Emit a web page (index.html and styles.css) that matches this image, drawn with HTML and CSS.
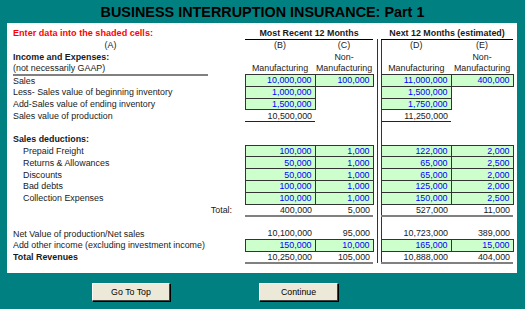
FILE: index.html
```html
<!DOCTYPE html>
<html>
<head>
<meta charset="utf-8">
<title>Business Interruption Insurance: Part 1</title>
<link rel="stylesheet" href="styles.css">
</head>
<body>
<h1 class="title">BUSINESS INTERRUPTION INSURANCE: Part 1</h1>
<div class="panel">
<table class="sheet">
<colgroup><col class="ca1"><col class="ca2"><col class="cb"><col class="cc"><col class="cs1"><col class="cs2"><col class="cd"><col class="ce"></colgroup>
<tr><td colspan="2" class="red b">Enter data into the shaded cells:</td><td colspan="2" class="hd b">Most Recent 12 Months</td><td></td><td></td><td colspan="2" class="hd b">Next 12 Months (estimated)</td></tr>
<tr><td class="ctr">(A)</td><td></td><td class="ctr">(B)</td><td class="ctr">(C)</td><td class="s1"></td><td class="s2"></td><td class="ctr">(D)</td><td class="ctr">(E)</td></tr>
<tr><td colspan="2" class="b">Income and Expenses:</td><td></td><td class="ctr">Non-</td><td class="s1"></td><td class="s2"></td><td></td><td class="ctr">Non-</td></tr>
<tr><td class="ul">(not necessarily GAAP)</td><td></td><td class="ctr">Manufacturing</td><td class="ctr">Manufacturing</td><td class="s1"></td><td class="s2"></td><td class="ctr">Manufacturing</td><td class="ctr">Manufacturing</td></tr>
<tr><td colspan="2">Sales</td><td class="n in">10,000,000</td><td class="n in">100,000</td><td class="s1"></td><td class="s2"></td><td class="n in">11,000,000</td><td class="n in">400,000</td></tr>
<tr><td colspan="2">Less- Sales value of beginning inventory</td><td class="n in">1,000,000</td><td></td><td class="s1"></td><td class="s2"></td><td class="n in">1,500,000</td><td></td></tr>
<tr><td colspan="2">Add-Sales value of ending inventory</td><td class="n in">1,500,000</td><td></td><td class="s1"></td><td class="s2"></td><td class="n in">1,750,000</td><td></td></tr>
<tr><td colspan="2">Sales value of production</td><td class="n sub">10,500,000</td><td></td><td class="s1"></td><td class="s2"></td><td class="n sub">11,250,000</td><td></td></tr>
<tr><td colspan="2"></td><td></td><td></td><td class="s1"></td><td class="s2"></td><td></td><td></td></tr>
<tr><td colspan="2" class="b">Sales deductions:</td><td></td><td></td><td class="s1"></td><td class="s2"></td><td></td><td></td></tr>
<tr><td colspan="2" class="ind">Prepaid Freight</td><td class="n in">100,000</td><td class="n in">1,000</td><td class="s1"></td><td class="s2"></td><td class="n in">122,000</td><td class="n in">2,000</td></tr>
<tr><td colspan="2" class="ind">Returns &amp; Allowances</td><td class="n in">50,000</td><td class="n in">1,000</td><td class="s1"></td><td class="s2"></td><td class="n in">65,000</td><td class="n in">2,500</td></tr>
<tr><td colspan="2" class="ind">Discounts</td><td class="n in">50,000</td><td class="n in">1,000</td><td class="s1"></td><td class="s2"></td><td class="n in">65,000</td><td class="n in">2,000</td></tr>
<tr><td colspan="2" class="ind">Bad debts</td><td class="n in">100,000</td><td class="n in">1,000</td><td class="s1"></td><td class="s2"></td><td class="n in">125,000</td><td class="n in">2,000</td></tr>
<tr><td colspan="2" class="ind">Collection Expenses</td><td class="n in">100,000</td><td class="n in">1,000</td><td class="s1"></td><td class="s2"></td><td class="n in">150,000</td><td class="n in">2,500</td></tr>
<tr><td colspan="2" class="tot">Total:</td><td class="n thick">400,000</td><td class="n thick">5,000</td><td class="s1"></td><td class="s2"></td><td class="n thick">527,000</td><td class="n thick">11,000</td></tr>
<tr><td colspan="2"></td><td></td><td></td><td class="s1"></td><td class="s2"></td><td></td><td></td></tr>
<tr><td colspan="2">Net Value of production/Net sales</td><td class="n">10,100,000</td><td class="n">95,000</td><td class="s1"></td><td class="s2"></td><td class="n">10,723,000</td><td class="n">389,000</td></tr>
<tr><td colspan="2">Add other income (excluding investment income)</td><td class="n in">150,000</td><td class="n in">10,000</td><td class="s1"></td><td class="s2"></td><td class="n in">165,000</td><td class="n in">15,000</td></tr>
<tr><td colspan="2" class="b">Total Revenues</td><td class="n thick">10,250,000</td><td class="n thick">105,000</td><td class="s1"></td><td class="s2"></td><td class="n thick">10,888,000</td><td class="n thick">404,000</td></tr>
</table>
</div>
<div class="actions">
<button class="btn btn-top" type="button">Go To Top</button>
<button class="btn btn-next" type="button">Continue</button>
</div>
</body>
</html>
```
FILE: styles.css
```css
html, body { margin: 0; padding: 0; }
body {
  background: #008080;
  width: 525px;
  height: 309px;
  overflow: hidden;
  font-family: "Liberation Sans", Arial, sans-serif;
}
.title {
  margin: 0;
  height: 23px;
  line-height: 24px;
  text-align: center;
  font-size: 14.4px;
  font-weight: bold;
  color: #000;
}
.panel {
  background: #fff;
  margin-left: 7px;
  width: 510px;
  height: 250px;
  box-sizing: border-box;
  padding: 4.4px 0 0 6px;
}
.sheet {
  border-collapse: collapse;
  table-layout: fixed;
  width: 500px;
  font-size: 8.9px;
  color: #1a1a1a;
}
.ca1 { width: 195px; }
.ca2 { width: 37px; }
.cb { width: 70px; }
.cc { width: 58px; }
.cs1 { width: 4px; }
.cs2 { width: 4px; }
.cd { width: 70px; }
.ce { width: 62px; }
.sheet tr { height: 11.79px; }
.sheet td {
  padding: 0;
  line-height: 10px;
  white-space: nowrap;
  overflow: hidden;
  vertical-align: middle;
}
.b { font-weight: bold; }
.red { color: #ff0000; font-size: 9.1px; }
.hd { text-align: center; border-bottom: 1px solid #000; }
.ctr { text-align: center; }
.ul { border-bottom: 2px solid #808080; }
.ind { padding-left: 10px !important; }
.tot { text-align: right; padding-right: 13px !important; }
.n { text-align: right; padding-right: 3px !important; }
.in {
  background: #ccffcc;
  color: #0000ff;
  border: 1px solid #333;
}
.sub { border-bottom: 1px solid #222; }
.thick { border-bottom: 2px solid #808080; }
.s1 { border-right: 1px solid #333; }
.s2 { border-right: 1px solid #333; }
.actions {
  display: flex;
  gap: 89px;
  padding: 10px 0 0 92px;
}
.btn {
  height: 18px;
  padding: 0;
  background: #ece9d8;
  border: 1px solid;
  border-color: #fff #404040 #404040 #fff;
  box-shadow: 1px 1px 0 #000;
  font-family: "Liberation Sans", Arial, sans-serif;
  font-size: 8.8px;
  color: #000;
}
.btn-top { width: 78px; }
.btn-next { width: 79px; }
```
